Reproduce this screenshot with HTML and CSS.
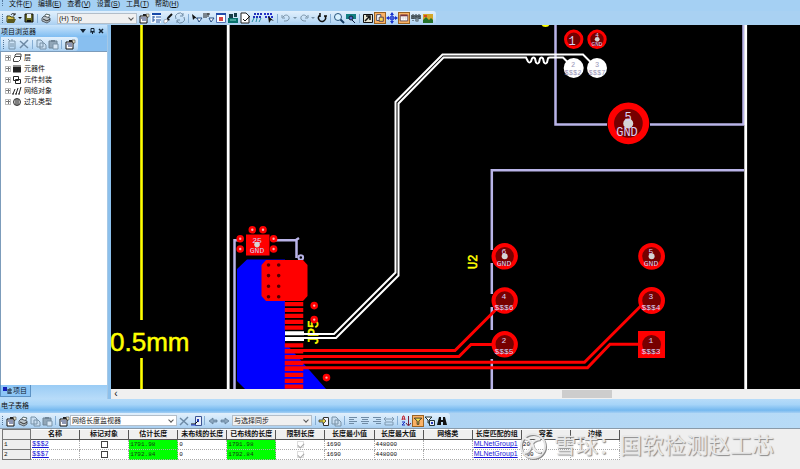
FILE: index.html
```html
<!DOCTYPE html>
<html lang="zh-CN">
<head>
<meta charset="utf-8">
<meta name="viewport" content="width=device-width, initial-scale=1">
<title>PCB 布线</title>
<link rel="stylesheet" href="styles.css">
</head>
<body>
<svg class="sprite" aria-hidden="true">
  <symbol id="open" viewBox="0 0 12 12"><path d="M2 4h3l1 1h3v5H2z" fill="#d6c34c" stroke="#3d3c18"/><path d="M3 7h8l-2 4H2z" fill="#5b5a20"/><path d="M6 3c1-2 3-2 4 0M10 1v2H8" fill="none" stroke="#222"/></symbol>
  <symbol id="save" viewBox="0 0 12 12"><path d="M2 2h8v8H2z" fill="#6a6e26" stroke="#111"/><path d="M4 2h4v4H4z" fill="#e8eef4"/><path d="M4 8h4v2H4z" fill="#111"/></symbol>
  <symbol id="print" viewBox="0 0 12 12"><path d="M4 5l2-3 4 1-2 3" fill="#fff" stroke="#566"/><path d="M2 6l2-2 6 2v3l-3 2-5-2z" fill="#b9c3c9" stroke="#56606a"/><path d="M3 7l4 2 3-2" fill="none" stroke="#333"/></symbol>
  <symbol id="props" viewBox="0 0 12 12"><path d="M2 4h7v7H2z" fill="#fff" stroke="#111"/><path d="M3 6h5M4 8h4" stroke="#1b2f6b"/><path d="M5 2h5v4L8 4H5z" fill="#222"/><path d="M8 2h3v3H9z" fill="#e8e2c8" stroke="#333" stroke-width=".5"/></symbol>
  <symbol id="tree" viewBox="0 0 12 12"><path d="M1 1h10v10H1z" fill="#f2f8ff"/><path d="M2 2h9" stroke="#1749a8" stroke-width="2"/><path d="M3 4v6M3 5h2M3 8h2M6 5h5M6 8h5M6 10h4" fill="none" stroke="#24549f"/></symbol>
  <symbol id="brush" viewBox="0 0 12 12"><path d="M10 2L6 6" stroke="#111" stroke-width="2"/><path d="M5 5l3 3-3 1z" fill="#111"/><path d="M2 8l3-1 1 2-2 2H2z" fill="#fff" stroke="#667" stroke-width=".5"/></symbol>
  <symbol id="refresh" viewBox="0 0 12 12"><path d="M2 7a4 4 0 0 1 7-4M10 5a4 4 0 0 1-7 4" fill="none" stroke="#718da6"/><path d="M9 1v3H6M3 11V8h3" fill="none" stroke="#718da6"/></symbol>
  <symbol id="route" viewBox="0 0 12 12"><path d="M1 2l1 6 2-2 3 1z" fill="#111"/><path d="M6 6h5L8 10z" fill="#fff" stroke="#244c82"/></symbol>
  <symbol id="route2" viewBox="0 0 12 12"><path d="M1 1v5M3 1v5M4 2h3M5 1v4" stroke="#222"/><path d="M6 6h5L8 10z" fill="#fff" stroke="#244c82"/></symbol>
  <symbol id="redgrid" viewBox="0 0 12 12"><path d="M1.500 2.500h9v8h-9z" fill="#fff" stroke="#5274b8"/><path d="M1 2h10" stroke="#224caa" stroke-width="2"/><path d="M4 5h4v4H4z" fill="#d54545"/></symbol>
  <symbol id="board" viewBox="0 0 12 12"><path d="M1 6h10v5H1z" fill="#08726d"/><path d="M2 2h4v4H2zM7 1h3v4H7z" fill="#183e48"/><path d="M3 8h6" stroke="#83d8cc"/></symbol>
  <symbol id="check" viewBox="0 0 12 12"><path d="M2 1h5l3 3v7H2z" fill="#fff" stroke="#222"/><path d="M4 7l2 2 5-5" fill="none" stroke="#111"/></symbol>
  <symbol id="nets" viewBox="0 0 12 12"><path d="M3 2h8M2 5h8" stroke="#2230ba" stroke-width="2" stroke-dasharray="2 1"/><path d="M3 6L1 10M6 6l-1 4M10 6L8 10" stroke="#228aa0"/></symbol>
  <symbol id="netsel" viewBox="0 0 12 12"><path d="M1 2h9M2 5h8" stroke="#2431c9" stroke-width="2" stroke-dasharray="2 1"/><path d="M5 4l1 7 2-3 3 1z" fill="#111"/></symbol>
  <symbol id="undo" viewBox="0 0 12 12"><path d="M3 5c3-4 7-1 6 2-1 2-3 2-5 2M2 3v3h3" fill="none" stroke="#7892a7"/></symbol>
  <symbol id="redo" viewBox="0 0 12 12"><path d="M9 5C6 1 2 4 3 7c1 2 3 2 5 2M10 3v3H7" fill="none" stroke="#7892a7"/></symbol>
  <symbol id="rotate" viewBox="0 0 12 12"><path d="M4 3a3.500 3.500 0 1 0 5 1M4 1v4M8 4h3" fill="none" stroke="#111" stroke-width="1.500"/></symbol>
  <symbol id="zoomi" viewBox="0 0 12 12"><circle cx="5" cy="5" r="3.500" fill="#d8f1ff" stroke="#26547d"/><path d="M7.500 7.500L11 11" stroke="#153b63" stroke-width="2"/></symbol>
  <symbol id="view" viewBox="0 0 12 12"><path d="M1 2h10v5H1z" fill="#137f82"/><circle cx="6" cy="6" r="2" fill="#4c67d2" stroke="#123"/><path d="M7 8l3 3" stroke="#124"/></symbol>
  <symbol id="nav" viewBox="0 0 12 12"><path d="M1.500 2.500h9v8h-9z" fill="#e8e6d4" stroke="#111"/><path d="M3 9l4-4M4 4h4v4" fill="none" stroke="#111" stroke-width="1.500"/></symbol>
  <symbol id="layers" viewBox="0 0 12 12"><path d="M2 2h5v7H2z" fill="#fff" stroke="#2e3958"/><path d="M5 5h5v5H5z" fill="#f7d64f" stroke="#435"/></symbol>
  <symbol id="cross" viewBox="0 0 12 12"><path d="M6 1v10M1 6h10" stroke="#1732cf"/><path d="M6 0l2 3H4zM6 12l2-3H4zM0 6l3-2v4zM12 6L9 4v4z" fill="#1732cf"/><circle cx="6" cy="6" r="2" fill="none" stroke="#1732cf"/></symbol>
  <symbol id="sheet" viewBox="0 0 12 12"><path d="M1.500 2.500h9v7h-9z" fill="#fff" stroke="#513b4b"/><path d="M2 3h8" stroke="#7d333b" stroke-width="2"/><path d="M2 6h8M5 4v5M8 4v5" stroke="#c5bac0" stroke-width=".5"/></symbol>
  <symbol id="chip" viewBox="0 0 12 12"><path d="M1 3h10v4H1z" fill="#56646c"/><path d="M3 2v7M6 2v8M9 2v6" stroke="#27343c" stroke-dasharray="1 1"/><circle cx="7" cy="8" r="2" fill="#758895"/></symbol>
  <symbol id="image" viewBox="0 0 12 12"><path d="M1 2h10v9H1z" fill="#d4a629"/><path d="M1 8l3-3 3 3 2-2 2 2v3H1z" fill="#26722b"/><path d="M2 3h3v2H2z" fill="#d64b22"/></symbol>
  <symbol id="doc" viewBox="0 0 12 12"><path d="M3 3h6v8H3zM4 6h4M4 8h4" fill="none" stroke="#7892a7"/><path d="M2 1l2 2M6 1v2" stroke="#7892a7"/></symbol>
  <symbol id="del" viewBox="0 0 12 12"><path d="M2 3l8 7M10 2l-8 8" stroke="#6e8aa5" stroke-width="1.500"/></symbol>
  <symbol id="copy" viewBox="0 0 12 12"><path d="M2 2h4l2 2v5H2zM5 5h4l2 2v4H5z" fill="#c9def1" stroke="#7892a7"/></symbol>
  <symbol id="paste" viewBox="0 0 12 12"><path d="M2 3h8v7H2z" fill="#91a6b8" stroke="#6f8496"/><path d="M4 2h4v2H4z" fill="#6f8496"/><path d="M6 6h5v5H6z" fill="#d8e7f5" stroke="#7892a7"/></symbol>
  <symbol id="ico" viewBox="0 0 12 12"><path d="M5.500 1.500h6v9h-6z" fill="#e9effa" stroke="#3d5494"/><path d="M7 4h2v3H7z" fill="#2039ba"/><path d="M1 9h4l3-3" fill="none" stroke="#111"/><path d="M1 10h5" stroke="#2038c8"/></symbol>
  <symbol id="left" viewBox="0 0 12 12"><path d="M2 6l4-3v2h4v2H6v2z" fill="#8da8c0" stroke="#59758f" stroke-width=".7"/></symbol>
  <symbol id="right" viewBox="0 0 12 12"><path d="M10 6L6 3v2H2v2h4v2z" fill="#8da8c0" stroke="#59758f" stroke-width=".7"/></symbol>
  <symbol id="addcol" viewBox="0 0 12 12"><path d="M5.500 2.500h5v8h-5z" fill="#f5f5ff" stroke="#333"/><path d="M1 5h4V3l3 3-3 3V7H1z" fill="#e4d34a" stroke="#222" stroke-width=".7"/></symbol>
  <symbol id="alignl" viewBox="0 0 12 12"><path d="M2 2.500h8M2 4.500h5M2 6.500h8M2 8.500h5" stroke="#6f8ba5"/></symbol>
  <symbol id="alignc" viewBox="0 0 12 12"><path d="M2 2.500h8M3 4.500h6M2 6.500h8M3 8.500h6" stroke="#6f8ba5"/></symbol>
  <symbol id="alignr" viewBox="0 0 12 12"><path d="M2 2.500h8M5 4.500h5M2 6.500h8M5 8.500h5" stroke="#6f8ba5"/></symbol>
  <symbol id="fit" viewBox="0 0 12 12"><path d="M2 4h8M3 2L1 4l2 2M9 2l2 2-2 2M2 7h8v3H2z" fill="none" stroke="#7f99b0"/></symbol>
  <symbol id="sort" viewBox="0 0 12 12"><path d="M2 5l1-4h1l1 4M2 4h3" fill="none" stroke="#c2202c"/><path d="M2 7h3L2 10h3" fill="none" stroke="#1a2fc0"/><path d="M8.500 1v9M6 8l2.500 3L11 8" fill="none" stroke="#7a1d35"/></symbol>
  <symbol id="filter" viewBox="0 0 12 12"><path d="M1.500 2.500h9L7 6v4H5V6z" fill="#f7e04c" stroke="#222"/></symbol>
  <symbol id="filter2" viewBox="0 0 12 12"><path d="M1 2h7L5 5v3H4V5z" fill="#fff" stroke="#233"/><path d="M5.500 5.500h5v5h-5z" fill="#e8eefa" stroke="#233"/><path d="M7 7l2 2M9 7L7 9" stroke="#2438b8"/></symbol>
  <symbol id="find" viewBox="0 0 12 12"><path d="M3 2h2v3h2V2h2l2 8H7V7H5v3H1z" fill="#111"/></symbol>
  <symbol id="t-layer" viewBox="0 0 10 10"><path d="M1.500 5.500l2-2h5v3l-2 2h-5zM3 4V2l1-1h5v3" fill="#fff" stroke="#444"/></symbol>
  <symbol id="t-comp" viewBox="0 0 10 10"><path d="M1 3h8v5H1z" fill="#222"/><path d="M2 1v8M4 1v8M6 1v8M8 1v8" stroke="#222"/></symbol>
  <symbol id="t-pkg" viewBox="0 0 10 10"><path d="M1.500 1.500h5v4h-5zM3.500 4.500h5v4h-5z" fill="#fff" stroke="#222"/></symbol>
  <symbol id="t-net" viewBox="0 0 10 10"><path d="M1 8l2-5M4 8l2-6M7 8l2-7" stroke="#222"/><path d="M0 8h2M3 8h2M6 8h2" stroke="#222"/></symbol>
  <symbol id="t-via" viewBox="0 0 10 10"><circle cx="5" cy="5" r="3.500" fill="#ccc" stroke="#333"/><path d="M4 2v6M6 2v6" stroke="#333"/></symbol>
</svg>

<div class="app">
  <nav class="menu" aria-label="菜单">
    <span class="grip"></span>
    <a href="#">文件(<u>F</u>)</a><a href="#">编辑(<u>E</u>)</a><a href="#">查看(<u>V</u>)</a><a href="#">设置(<u>S</u>)</a><a href="#">工具(<u>T</u>)</a><a href="#">帮助(<u>H</u>)</a>
  </nav>

  <div class="bar main-bar">
    <div class="tools">
      <span class="grip"></span>
      <button aria-label="打开"><svg><use href="#open"/></svg></button>
      <span class="drop"></span>
      <button aria-label="保存"><svg><use href="#save"/></svg></button>
      <span class="sep"></span>
      <button aria-label="打印"><svg><use href="#print"/></svg></button>
      <span class="combo layer"><select aria-label="层"><option>(H) Top</option></select></span>
      <button aria-label="属性"><svg><use href="#props"/></svg></button>
      <button aria-label="项目浏览器"><svg><use href="#tree"/></svg></button>
      <button aria-label="刷"><svg><use href="#brush"/></svg></button>
      <button aria-label="刷新"><svg><use href="#refresh"/></svg></button>
      <span class="sep"></span>
      <button aria-label="选择"><svg><use href="#route"/></svg></button>
      <button aria-label="选择网络"><svg><use href="#route2"/></svg></button>
      <button aria-label="窗口"><svg><use href="#redgrid"/></svg></button>
      <button aria-label="元件"><svg><use href="#board"/></svg></button>
      <button aria-label="验证"><svg><use href="#check"/></svg></button>
      <button aria-label="网络"><svg><use href="#nets"/></svg></button>
      <button aria-label="网络选择"><svg><use href="#netsel"/></svg></button>
      <span class="sep"></span>
      <button aria-label="撤消"><svg><use href="#undo"/></svg></button>
      <span class="drop dim"></span>
      <button aria-label="重做"><svg><use href="#redo"/></svg></button>
      <span class="drop dim"></span>
      <button aria-label="重画"><svg><use href="#rotate"/></svg></button>
      <span class="sep"></span>
      <button aria-label="缩放"><svg><use href="#zoomi"/></svg></button>
      <button aria-label="板视图"><svg><use href="#view"/></svg></button>
      <span class="sep"></span>
      <button aria-label="导航"><svg><use href="#nav"/></svg></button>
      <button class="on" aria-label="图层"><svg><use href="#layers"/></svg></button>
      <button aria-label="移动"><svg><use href="#cross"/></svg></button>
      <button class="on" aria-label="电子表格"><svg><use href="#sheet"/></svg></button>
      <button aria-label="芯片"><svg><use href="#chip"/></svg></button>
      <button aria-label="图像"><svg><use href="#image"/></svg></button>
    </div>
  </div>

  <div class="work">
    <aside class="side">
      <header class="side-title"><h2>项目浏览器</h2>
        <svg class="winctl" viewBox="0 0 26 8" aria-hidden="true"><path d="M1 2h6L4 6z" fill="#123"/><path d="M12 1.500h3v3h-3zM11 5h5M13.500 5v2" fill="none" stroke="#123"/><path d="M20 2l4 4M24 2l-4 4" stroke="#123" stroke-width="1.500"/></svg>
      </header>
      <div class="bar side-bar"><div class="tools">
        <span class="grip"></span>
        <button aria-label="新建"><svg><use href="#doc"/></svg></button>
        <button aria-label="删除"><svg><use href="#del"/></svg></button>
        <span class="sep"></span>
        <button aria-label="复制"><svg><use href="#copy"/></svg></button>
        <button aria-label="粘贴"><svg><use href="#paste"/></svg></button>
        <span class="sep"></span>
        <button aria-label="属性"><svg><use href="#props"/></svg></button>
      </div></div>
      <ul class="tree">
        <li><span class="plus"></span><svg><use href="#t-layer"/></svg>层</li>
        <li><span class="plus"></span><svg><use href="#t-comp"/></svg>元器件</li>
        <li><span class="plus"></span><svg><use href="#t-pkg"/></svg>元件封装</li>
        <li><span class="plus"></span><svg><use href="#t-net"/></svg>网络对象</li>
        <li><span class="plus"></span><svg><use href="#t-via"/></svg>过孔类型</li>
      </ul>
      <div class="tabs"><button class="tab"><svg viewBox="0 0 10 8"><path d="M0 0h4v4H0z" fill="#1320b8"/><path d="M5 3h4M5 6h4M5 2v5M7 1v6" stroke="#234"/></svg>项目</button></div>
    </aside>

    <main class="board">
      <svg class="pcb" viewBox="111 25 689 364" preserveAspectRatio="xMinYMin slice" role="img" aria-label="PCB">
        <g fill="none" stroke="#b9b4e8" stroke-width="2.500">
          <path d="M555.500 25v99.500H607M650 124.500h94M743.500 25v100"/>
          <path d="M744 170.200H491.800V250M491.800 263v31M491.800 307v23M491.800 359v30"/>
          <path d="M234.500 389V240.200h4M274 240.200h23M296.500 239v19M296 240l3-2"/>
          <circle cx="300.800" cy="257.500" r="2.300" stroke-width="2"/>
        </g>
        <path d="M237 269l10-9.500h38V347h4l37 42h-81l-8-8z" fill="#00f"/>
        <path d="M228.200 25v364M745.700 25v364" stroke="#fff" stroke-width="2.800"/>
        <path d="M141.500 25v295M141.500 358v31" stroke="#ff0" stroke-width="2.600"/>
        <ellipse cx="545.500" cy="24" rx="4" ry="3" fill="#ff0"/>
        <text class="silk" x="110" y="351" font-size="26">0.5mm</text>
        <text class="silk small" font-size="12" transform="translate(477 269) rotate(-90)">U2</text>
        <text class="silk small" font-size="14" transform="translate(318 345) rotate(-90)">JP5</text>
        <path d="M266 260h37l4.500 5v31l-4.500 5h-37l-4.500-5v-31z" fill="#f00"/>
        <path d="M268.500 265v33M278.700 265v33" fill="none" stroke="#500" stroke-width="3.600" stroke-linecap="round" stroke-dasharray="0 10.600"/>
        <path d="M294 302v28M294 343.300v46" stroke="#f00" stroke-width="18.500" stroke-dasharray="4.200 1.700"/>
        <path d="M285 333.300h19M285 339h19" stroke="#fff" stroke-width="4"/>
        <g fill="none" stroke="#f00" stroke-width="3">
          <path d="M285 350.500h170l42-42"/>
          <path d="M285 356.500h174l12-12h33"/>
          <path d="M285 362.200h299.500l58-58"/>
          <path d="M285 367.700h302.500l22.500-23.400h30"/>
        </g>
        <g fill="none" stroke="#fff" stroke-width="2">
          <path d="M303 334h31l61.500-61.500V102L442.500 54.500H583l9 9"/>
          <path d="M303 338h33l62.500-62.500V103.500l45-46H526l2 4q1.500 2 3 0l1-3q2-2 3 0l1 4q1.500 2 3 0l1-4q2-2 3 0l1 4q1.500 2 3 0l1-4q0-1 2-1h13l7 7"/>
        </g>
        <path d="M246 234.500h23.500V255.500H246zM638 331h27v27h-27z" fill="#f00"/>
        <g fill="#700" stroke="#f00" stroke-width="4">
          <circle cx="504.700" cy="256.300" r="11.200"/><circle cx="651.600" cy="256.300" r="11.400"/>
          <circle cx="504.700" cy="300.500" r="11.200"/><circle cx="651.600" cy="300.500" r="11.400"/>
          <circle cx="504.700" cy="344.300" r="11.200"/><circle cx="651.600" cy="344.300" r="11.400"/>
          <circle cx="573.700" cy="39.300" r="8.200" stroke-width="3"/><circle cx="597" cy="39.300" r="8.200" stroke-width="3"/>
          <circle cx="628.400" cy="123.300" r="17.600" stroke-width="6.500"/>
        </g>
        <g fill="#fff"><circle cx="573.700" cy="68" r="10"/><circle cx="597" cy="68" r="10"/></g>
        <g fill="#f5b0b0" stroke="#f00" stroke-width="2.600">
          <circle cx="240.200" cy="238.700" r="2.500"/><circle cx="240.200" cy="249" r="2.500"/><circle cx="252.300" cy="229.800" r="2.500"/><circle cx="263" cy="229.800" r="2.500"/><circle cx="273.600" cy="238.700" r="2.500"/><circle cx="273.600" cy="249" r="2.500"/><circle cx="314.200" cy="305.600" r="2.500"/><circle cx="314.200" cy="319.600" r="2.500"/><circle cx="326.500" cy="377.600" r="2.500"/>
        </g>
        <g fill="#d5d5d5"><circle cx="628.200" cy="123.500" r="5"/><circle cx="504.700" cy="256.300" r="3"/><circle cx="651.600" cy="256.300" r="3"/><circle cx="597.200" cy="39.300" r="2.400"/><circle cx="257" cy="244.600" r="2.800"/></g>
        <g class="pin">
          <text x="257" y="243">25</text><text x="257" y="253">GND</text>
          <text x="504" y="254">6</text><text x="504" y="266">GND</text>
          <text x="651" y="254">5</text><text x="651" y="266">GND</text>
          <text x="504" y="299">4</text><text x="504" y="310">$$$6</text>
          <text x="651" y="299">3</text><text x="651" y="310">$$$4</text>
          <text x="504" y="343">2</text><text x="504" y="354">$$$5</text>
          <text x="651" y="343">1</text><text x="651" y="354">$$$3</text>
          <text class="tiny" x="597" y="37">4</text><text class="tiny" x="597" y="46">GND</text>
          <text class="big" x="572" y="45">1</text>
          <text class="big" x="628" y="121">5</text><text class="big" x="627" y="136">GND</text>
        </g>
        <g class="pin grey">
          <text x="573" y="67">2</text><text x="573" y="75">$$$2</text>
          <text x="597" y="67">3</text><text x="597" y="75">$$$7</text>
        </g>
      </svg>
      <div class="scroll"><span class="arrow">‹</span><span class="thumb"></span></div>
    </main>
  </div>

  <section class="sheet">
    <h2 class="sheet-title">电子表格</h2>
    <div class="bar sheet-bar"><div class="tools">
      <span class="grip"></span>
      <button aria-label="属性"><svg><use href="#props"/></svg></button>
      <button aria-label="打印"><svg><use href="#print"/></svg></button>
      <button aria-label="复制"><svg><use href="#copy"/></svg></button>
      <button aria-label="粘贴"><svg><use href="#paste"/></svg></button>
      <span class="sep"></span>
      <button aria-label="视图"><svg><use href="#props"/></svg></button>
      <span class="combo monitor"><select aria-label="监视器"><option>网络长度监视器</option></select></span>
      <button aria-label="删除"><svg><use href="#del"/></svg></button>
      <button aria-label="导出"><svg><use href="#ico"/></svg></button>
      <span class="sep"></span>
      <button aria-label="后退"><svg><use href="#left"/></svg></button>
      <button aria-label="前进"><svg><use href="#right"/></svg></button>
      <span class="combo sync"><select aria-label="同步"><option>与选择同步</option></select></span>
      <span class="sep"></span>
      <button aria-label="添加"><svg><use href="#addcol"/></svg></button>
      <button aria-label="复制行"><svg><use href="#copy"/></svg></button>
      <span class="sep"></span>
      <button aria-label="左对齐"><svg><use href="#alignl"/></svg></button>
      <button aria-label="居中"><svg><use href="#alignc"/></svg></button>
      <button aria-label="右对齐"><svg><use href="#alignr"/></svg></button>
      <button aria-label="适合宽度"><svg><use href="#fit"/></svg></button>
      <span class="sep"></span>
      <button aria-label="排序"><svg><use href="#sort"/></svg></button>
      <button class="on" aria-label="筛选"><svg><use href="#filter"/></svg></button>
      <button aria-label="清除筛选"><svg><use href="#filter2"/></svg></button>
      <button aria-label="查找"><svg><use href="#find"/></svg></button>
    </div></div>
    <div class="grid">
      <table>
        <thead><tr><th class="num"></th><th>名称</th><th>标记对象</th><th>估计长度</th><th>未布线的长度</th><th>已布线的长度</th><th>限制长度</th><th>长度最小值</th><th>长度最大值</th><th>网络类</th><th>长度匹配的组</th><th>容差</th><th>边缘</th></tr></thead>
        <tbody>
          <tr><th class="num">1</th><td><a href="#">$$$2</a></td><td class="mid"><input type="checkbox" aria-label="标记对象 $$$2"></td><td class="ok">1791.98</td><td>0</td><td class="ok">1791.98</td><td class="mid"><input type="checkbox" checked disabled aria-label="限制长度 $$$2"></td><td>1690</td><td>448000</td><td></td><td><a class="sans" href="#">MLNetGroup1</a></td><td>200</td><td></td></tr>
          <tr><th class="num">2</th><td><a href="#">$$$7</a></td><td class="mid"><input type="checkbox" aria-label="标记对象 $$$7"></td><td class="ok">1792.84</td><td>0</td><td class="ok">1792.84</td><td class="mid"><input type="checkbox" checked disabled aria-label="限制长度 $$$7"></td><td>1690</td><td>448000</td><td></td><td><a class="sans" href="#">MLNetGroup1</a></td><td>700</td><td></td></tr>
        </tbody>
      </table>
      <div class="mark">
        <svg viewBox="0 0 28 28" aria-hidden="true"><g fill="none" stroke-width="2"><circle cx="15" cy="15" r="12" stroke="#888"/><circle cx="14" cy="14" r="12" stroke="#e6e6e6"/><path d="M6 7q8 2 9 8t8 6M22 8q-8 1-9 7t-7 7" stroke="#999"/><path d="M5 6q8 2 9 8t8 6M21 7q-8 1-9 7t-7 7" stroke="#eee"/></g></svg>
        <span>雪球：国软检测赵工芯</span>
      </div>
    </div>
  </section>
</div>
</body>
</html>
```
FILE: styles.css
```css
* { box-sizing: border-box; }

body {
  margin: 0;
  background: #efefef;
  color: #111;
  font: 7px/9px "Liberation Sans", "Noto Sans CJK SC", sans-serif;
}

h2, ul { margin: 0; padding: 0; font-size: inherit; font-weight: 400; }
a { color: inherit; text-decoration: none; }
.sprite { position: absolute; width: 0; height: 0; }

.app { display: flex; flex-direction: column; height: 100vh; overflow: hidden; }

.menu {
  display: flex;
  flex: none;
  gap: 6px;
  height: 11px;
  padding-bottom: 2px;
  line-height: 8px;
  align-items: flex-start;
  background: #a5d0f3;
}
.menu a { white-space: nowrap; line-height: 7px; }
.menu .grip { margin-right: -4px; height: 6px; }

.bar { display: flex; flex: none; height: 14px; background: #a9d1f2; }
.tools {
  display: flex;
  align-items: center;
  padding-right: 2px;
  border-radius: 0 3px 3px 0;
  background: linear-gradient(#e2f0fc, #c4e0f8 60%, #a8cef0);
}
.tools button {
  flex: none;
  width: 12px;
  height: 12px;
  padding: 0;
  border: 0;
  background: none;
  line-height: 0;
}
.tools button svg { display: block; width: 100%; height: 100%; }
.tools button.on { border: 1px solid #9a6424; background: #fbb264; }

.grip { flex: none; width: 5px; height: 9px; border-left: 1px dotted #55779a; margin-left: 2px; margin-right: -2px; }
.sep { flex: none; width: 1px; height: 9px; margin: 0 2px; background: #86aed4; }
.drop { flex: none; width: 4px; margin: 0 1px; border: 2px solid transparent; border-top-color: #111; border-bottom: 0; }
.drop.dim { border-top-color: #7892a7; }

.combo { position: relative; flex: none; height: 11px; border: 1px solid #b3bec9; background: #f0f0f0; }
.combo::after {
  content: "";
  position: absolute;
  right: 3px;
  top: 2px;
  width: 3px;
  height: 3px;
  border: solid #555;
  border-width: 0 1px 1px 0;
  transform: rotate(45deg);
  pointer-events: none;
}
.combo select {
  display: block;
  width: 100%;
  height: 9px;
  padding: 0 8px 0 1px;
  border: 0;
  appearance: none;
  background: none;
  color: #222;
  font: inherit;
}
.layer { width: 80px; margin: 0 1px 0 5px; }
.monitor { width: 107px; margin-right: 1px; background: #fff; }
.sync { width: 80px; margin: 0 1px; }

.work { display: flex; flex: 1; min-height: 0; background: #8cc0ec; }

.side { display: flex; flex-direction: column; flex: none; width: 108px; margin-right: 3px; border-right: 1px solid #a5c8e6; }
.side-title {
  display: flex;
  justify-content: space-between;
  align-items: center;
  height: 12px;
  padding: 0 2px 0 1px;
  background: linear-gradient(#cbe5fb, #7fbdf2);
}
.winctl { width: 26px; height: 8px; }
.side-bar { margin-left: 1px; background: #88bff0; }
.tree { flex: 1; padding: 0 0 0 4px; border: 1px solid #7c9cbb; border-width: 1px 0 0 1px; background: #fff; list-style: none; }
.tree li { display: flex; align-items: center; height: 11px; }
.tree svg { width: 10px; height: 10px; margin: 0 2px 0 1px; }
.plus {
  width: 6px;
  height: 6px;
  border: 1px solid #bbb;
  background: linear-gradient(#777, #777) center / 4px 1px no-repeat, linear-gradient(#777, #777) center / 1px 4px no-repeat;
}
.tabs { height: 14px; background: linear-gradient(#9accf5, #b8dcf9); }
.tab {
  display: flex;
  align-items: center;
  height: 12px;
  padding: 0 3px 0 2px;
  border: 1px solid #5c92c4;
  border-top: 0;
  background: #8dc6f6;
  color: #123;
  font: inherit;
}
.tab svg { width: 10px; height: 8px; }

.board { display: flex; flex-direction: column; flex: 1; min-width: 0; background: #000; }
.pcb { display: block; flex: 1; width: 100%; min-height: 0; }
.silk { fill: #ff0; font-family: "Liberation Sans", sans-serif; stroke: #ff0; stroke-width: .5px; }
.silk.small { font-family: "Liberation Mono", monospace; }
.pin { fill: #d8d0f4; font-family: "Liberation Mono", monospace; font-size: 8px; text-anchor: middle; }
.pin .tiny { font-size: 6px; }
.pin .big { font-size: 12px; }
.pin.grey { fill: #9a96b8; font-size: 7px; }

.scroll { display: flex; flex: none; align-items: center; height: 10px; background: #f0f0f0; }
.scroll .arrow { width: 10px; text-align: center; font-size: 10px; line-height: 8px; }
.thumb { width: 50px; height: 8px; margin-left: 64%; background: #cdcdcd; }

.sheet { flex: none; }
.sheet-title { height: 14px; padding-left: 1px; line-height: 13px; background: linear-gradient(#b7dcf9, #a6d4f8 40%, #74b8ef 80%, #a5d0f4); }
.sheet-bar { height: 15px; background: linear-gradient(90deg, #a2caee, #b7dbf7); }

.grid { position: relative; height: 41px; padding-left: 2px; border-top: 1px solid #8a9aa8; background: #efefef; }
table { width: 618px; border-collapse: collapse; table-layout: fixed; background: #fff; font-family: "Liberation Mono", "Noto Sans CJK SC", monospace; }
th, td { height: 9px; padding: 0 1px; border: 1px dotted #aaa; line-height: 8px; font-size: 6px; text-align: left; white-space: nowrap; }
thead th { height: 10px; padding: 0; border: 1px solid #555; border-top: 0; background: #efefef; font-size: 7px; text-align: center; }
.num { width: 28px; border: 1px solid #777; background: #efefef; font-weight: 400; }
.ok { background: #0f0; color: #143b14; }
td a { color: #1414d8; font-size: 7px; text-decoration: underline; }
td .sans { font-family: "Liberation Sans", sans-serif; }
.mid { text-align: center; }
td input { display: block; width: 7px; height: 7px; margin: 0 auto; border: 1px solid #444; appearance: none; background: #fff; }
td input:checked { border-color: #ddd; }
td input:checked::after { content: ""; display: block; width: 3px; height: 5px; margin-left: 1px; border: solid #aaa; border-width: 0 1px 1px 0; transform: rotate(45deg); }

.mark { position: absolute; left: 519px; top: 2px; display: flex; align-items: center; gap: 7px; height: 30px; color: #e8e8e8; font-size: 22px; line-height: 30px; white-space: nowrap; text-shadow: 1px 1px 1px #888; }
.mark svg { width: 28px; height: 28px; }
```
